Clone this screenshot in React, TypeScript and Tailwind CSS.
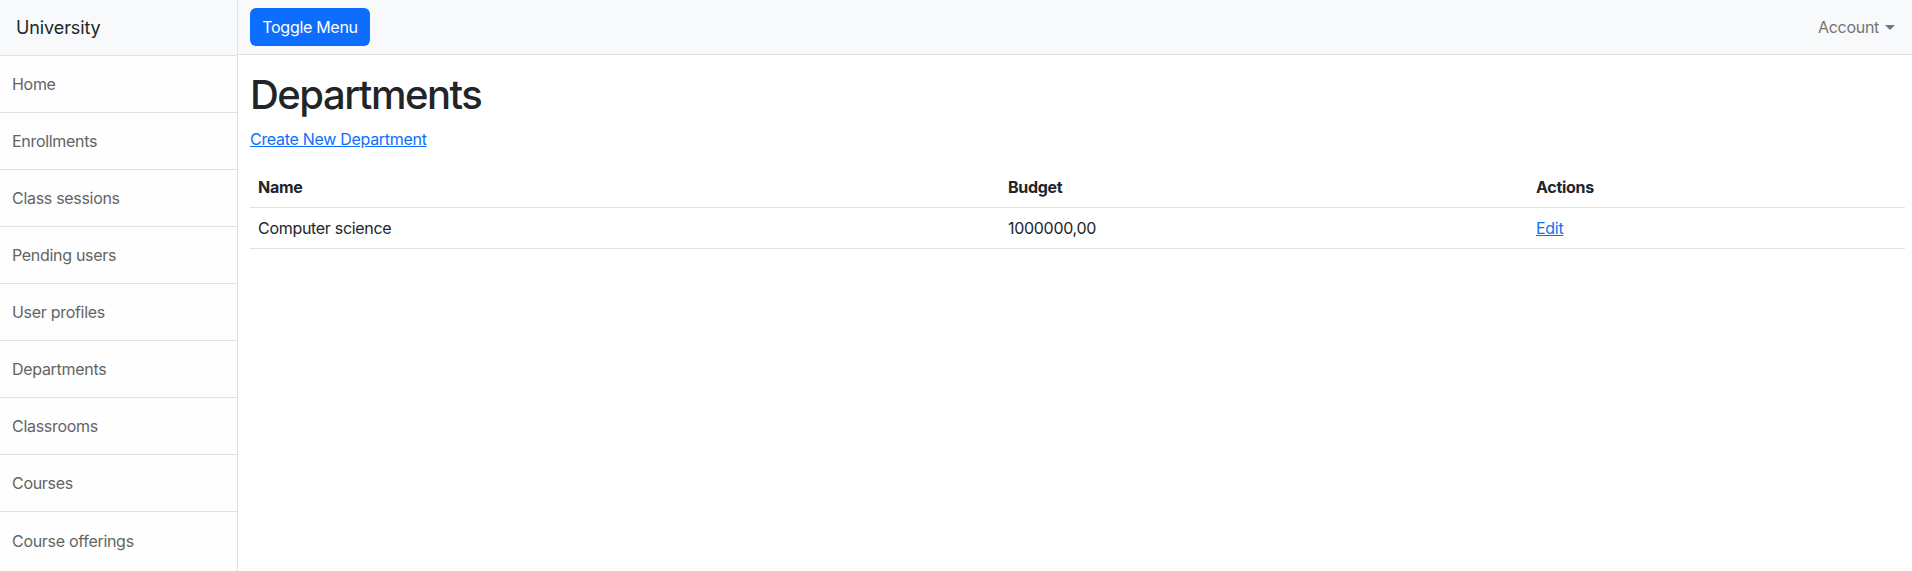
export default function App() {
  const navItems = [
    'Home',
    'Enrollments',
    'Class sessions',
    'Pending users',
    'User profiles',
    'Departments',
    'Classrooms',
    'Courses',
    'Course offerings',
  ];

  const departments = [{ name: 'Computer science', budget: '1000000,00' }];

  return (
    <div className="flex min-h-screen bg-white font-['Inter',sans-serif] tracking-[-0.3px] text-[#212529]">
      {/* Sidebar */}
      <aside className="w-[238px] shrink-0 border-r border-[#dee2e6] bg-[#fefefe]">
        <div className="flex h-[56px] items-center border-b border-[#dee2e6] bg-[#f8f9fa] pl-4 text-[18px] tracking-[-0.1px]">
          University
        </div>
        <div className="flex flex-col">
          {navItems.map((item) => (
            <a
              key={item}
              href="#"
              className="flex h-[57px] items-center border-b border-[#dee2e6] px-3 text-base text-[#636464] last:border-b-0"
            >
              {item}
            </a>
          ))}
        </div>
      </aside>

      {/* Page content */}
      <div className="flex min-w-0 flex-1 flex-col">
        <nav className="flex h-[55px] items-center justify-between border-b border-[#dee2e6] bg-[#f8f9fa] pl-3 pr-[17px]">
          <button className="h-[38px] w-[120px] rounded-md bg-[#0d6efd] text-base text-white">
            Toggle Menu
          </button>
          <a href="#" className="flex items-center text-base text-[#737475]">
            Account
            <span className="ml-[6px] mt-[1px] h-0 w-0 border-x-[5px] border-t-[5px] border-x-transparent border-t-[#737475]" />
          </a>
        </nav>

        <main className="pl-3 pr-[7px]">
          <h1 className="mt-4 mb-2 text-[40px] font-medium leading-[48px] tracking-[-1.5px]">Departments</h1>
          <p className="mb-4">
            <a href="#" className="text-base leading-6 text-[#0d6efd] underline">
              Create New Department
            </a>
          </p>

          <table className="w-full table-fixed border-collapse text-left text-base">
            <thead>
              <tr className="border-b border-[#dee2e6]">
                <th className="w-[750px] px-2 py-2 font-bold leading-6">Name</th>
                <th className="w-[528px] px-2 py-2 font-bold leading-6">Budget</th>
                <th className="px-2 py-2 font-bold leading-6">Actions</th>
              </tr>
            </thead>
            <tbody>
              {departments.map((d) => (
                <tr key={d.name} className="border-b border-[#dee2e6]">
                  <td className="px-2 py-2 leading-6">{d.name}</td>
                  <td className="px-2 py-2 leading-6">{d.budget}</td>
                  <td className="px-2 py-2 leading-6">
                    <a href="#" className="text-[#0d6efd] underline">
                      Edit
                    </a>
                  </td>
                </tr>
              ))}
            </tbody>
          </table>
        </main>
      </div>
    </div>
  );
}
